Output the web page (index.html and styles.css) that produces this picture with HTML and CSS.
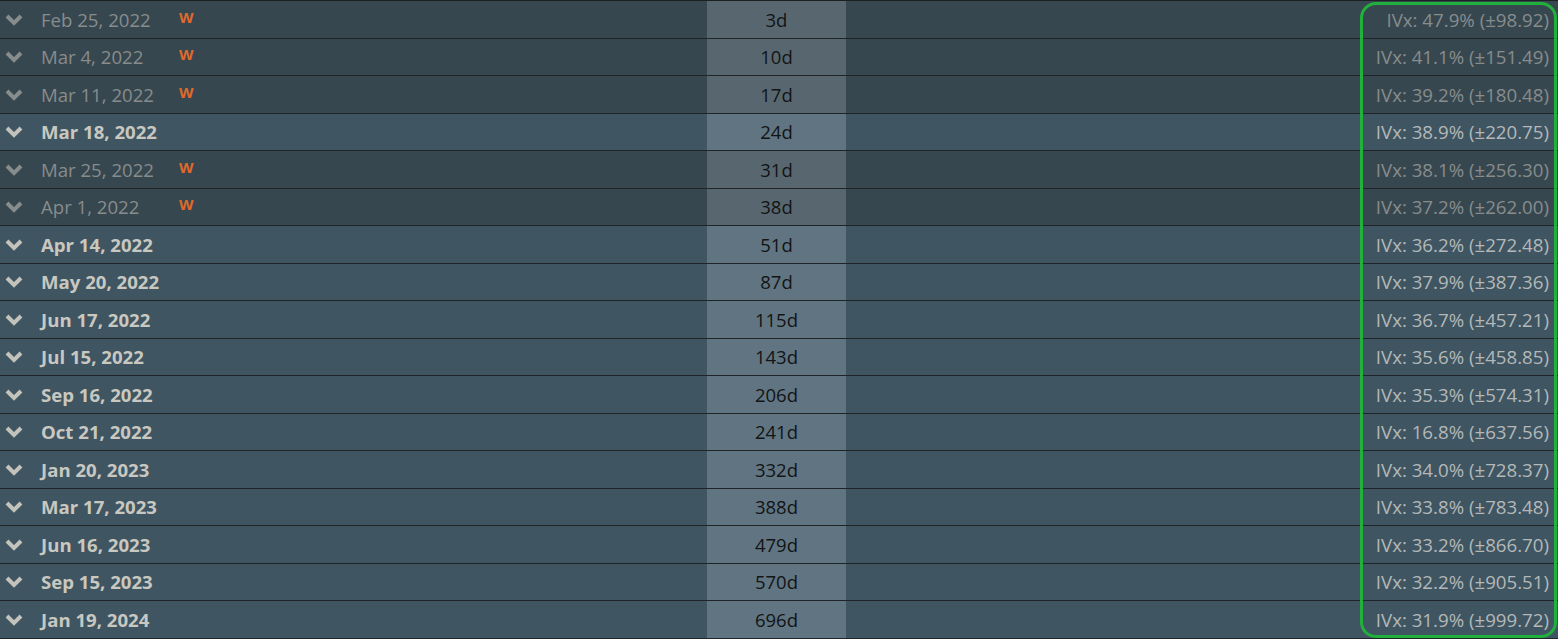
FILE: index.html
```html
<!DOCTYPE html>
<html>
<head>
<meta charset="utf-8">
<link rel="stylesheet" href="styles.css">
</head>
<body>
<div class="chain">
  <div class="row weekly"><div class="exp"><svg class="chev" viewBox="0 0 18 12"><path d="M2 2 L9 9 L16 2"/></svg><span class="date">Feb 25, 2022</span><span class="wk">W</span></div><div class="dte">3d</div><div class="ivx">IVx: 47.9% (±98.92)</div></div>
  <div class="row weekly"><div class="exp"><svg class="chev" viewBox="0 0 18 12"><path d="M2 2 L9 9 L16 2"/></svg><span class="date">Mar 4, 2022</span><span class="wk">W</span></div><div class="dte">10d</div><div class="ivx">IVx: 41.1% (±151.49)</div></div>
  <div class="row weekly"><div class="exp"><svg class="chev" viewBox="0 0 18 12"><path d="M2 2 L9 9 L16 2"/></svg><span class="date">Mar 11, 2022</span><span class="wk">W</span></div><div class="dte">17d</div><div class="ivx">IVx: 39.2% (±180.48)</div></div>
  <div class="row monthly"><div class="exp"><svg class="chev" viewBox="0 0 18 12"><path d="M2 2 L9 9 L16 2"/></svg><span class="date">Mar 18, 2022</span></div><div class="dte">24d</div><div class="ivx">IVx: 38.9% (±220.75)</div></div>
  <div class="row weekly"><div class="exp"><svg class="chev" viewBox="0 0 18 12"><path d="M2 2 L9 9 L16 2"/></svg><span class="date">Mar 25, 2022</span><span class="wk">W</span></div><div class="dte">31d</div><div class="ivx">IVx: 38.1% (±256.30)</div></div>
  <div class="row weekly"><div class="exp"><svg class="chev" viewBox="0 0 18 12"><path d="M2 2 L9 9 L16 2"/></svg><span class="date">Apr 1, 2022</span><span class="wk">W</span></div><div class="dte">38d</div><div class="ivx">IVx: 37.2% (±262.00)</div></div>
  <div class="row monthly"><div class="exp"><svg class="chev" viewBox="0 0 18 12"><path d="M2 2 L9 9 L16 2"/></svg><span class="date">Apr 14, 2022</span></div><div class="dte">51d</div><div class="ivx">IVx: 36.2% (±272.48)</div></div>
  <div class="row monthly"><div class="exp"><svg class="chev" viewBox="0 0 18 12"><path d="M2 2 L9 9 L16 2"/></svg><span class="date">May 20, 2022</span></div><div class="dte">87d</div><div class="ivx">IVx: 37.9% (±387.36)</div></div>
  <div class="row monthly"><div class="exp"><svg class="chev" viewBox="0 0 18 12"><path d="M2 2 L9 9 L16 2"/></svg><span class="date">Jun 17, 2022</span></div><div class="dte">115d</div><div class="ivx">IVx: 36.7% (±457.21)</div></div>
  <div class="row monthly"><div class="exp"><svg class="chev" viewBox="0 0 18 12"><path d="M2 2 L9 9 L16 2"/></svg><span class="date">Jul 15, 2022</span></div><div class="dte">143d</div><div class="ivx">IVx: 35.6% (±458.85)</div></div>
  <div class="row monthly"><div class="exp"><svg class="chev" viewBox="0 0 18 12"><path d="M2 2 L9 9 L16 2"/></svg><span class="date">Sep 16, 2022</span></div><div class="dte">206d</div><div class="ivx">IVx: 35.3% (±574.31)</div></div>
  <div class="row monthly"><div class="exp"><svg class="chev" viewBox="0 0 18 12"><path d="M2 2 L9 9 L16 2"/></svg><span class="date">Oct 21, 2022</span></div><div class="dte">241d</div><div class="ivx">IVx: 16.8% (±637.56)</div></div>
  <div class="row monthly"><div class="exp"><svg class="chev" viewBox="0 0 18 12"><path d="M2 2 L9 9 L16 2"/></svg><span class="date">Jan 20, 2023</span></div><div class="dte">332d</div><div class="ivx">IVx: 34.0% (±728.37)</div></div>
  <div class="row monthly"><div class="exp"><svg class="chev" viewBox="0 0 18 12"><path d="M2 2 L9 9 L16 2"/></svg><span class="date">Mar 17, 2023</span></div><div class="dte">388d</div><div class="ivx">IVx: 33.8% (±783.48)</div></div>
  <div class="row monthly"><div class="exp"><svg class="chev" viewBox="0 0 18 12"><path d="M2 2 L9 9 L16 2"/></svg><span class="date">Jun 16, 2023</span></div><div class="dte">479d</div><div class="ivx">IVx: 33.2% (±866.70)</div></div>
  <div class="row monthly"><div class="exp"><svg class="chev" viewBox="0 0 18 12"><path d="M2 2 L9 9 L16 2"/></svg><span class="date">Sep 15, 2023</span></div><div class="dte">570d</div><div class="ivx">IVx: 32.2% (±905.51)</div></div>
  <div class="row monthly"><div class="exp"><svg class="chev" viewBox="0 0 18 12"><path d="M2 2 L9 9 L16 2"/></svg><span class="date">Jan 19, 2024</span></div><div class="dte">696d</div><div class="ivx">IVx: 31.9% (±999.72)</div></div>
  <div class="highlight"></div>
</div>
</body>
</html>
```
FILE: styles.css
```css
html, body {
  margin: 0;
  padding: 0;
  background: #2a3238;
}
body {
  width: 1558px;
  height: 639px;
  overflow: hidden;
  font-family: "Open Sans", "DejaVu Sans", sans-serif;
}
.chain {
  position: relative;
  border-top: 1px solid #1c2024;
}
.row {
  display: grid;
  grid-template-columns: 707px 139px 1fr;
  height: 37.5px;
  box-sizing: border-box;
  border-bottom: 1px solid #1f2428;
}
.row > div {
  display: flex;
  align-items: center;
}
.weekly { background: #37474f; }
.monthly { background: #3f5562; }
.weekly .dte { background: #58676f; }
.monthly .dte { background: #607581; }
.exp {
  padding-left: 5px;
}
.chev {
  width: 18px;
  height: 12px;
  fill: none;
  stroke-width: 4;
  stroke-linejoin: miter;
  stroke-linecap: butt;
  margin-right: 18px;
  margin-top: 1px;
}
.weekly .chev { stroke: #878c8d; }
.monthly .chev { stroke: #c3c3bc; }
.date {
  font-size: 18.6px;
  width: 138px;
}
.weekly .date { color: #878c8d; }
.monthly .date { color: #c9c8c0; font-weight: 700; }
.wk {
  color: #e0692b;
  font-weight: 700;
  font-size: 15px;
  margin-top: -5px;
}
.dte {
  justify-content: center;
  font-size: 18.5px;
  color: #121416;
}
.ivx {
  justify-content: flex-end;
  padding-right: 9px;
  font-size: 18.7px;
}
.weekly .ivx { color: #878c8d; }
.monthly .ivx { color: #b4b8b8; }
.highlight {
  position: absolute;
  left: 1360px;
  top: 1px;
  width: 197px;
  height: 636px;
  box-sizing: border-box;
  border: 3px solid #22b03c;
  border-radius: 16px;
  pointer-events: none;
}
```
